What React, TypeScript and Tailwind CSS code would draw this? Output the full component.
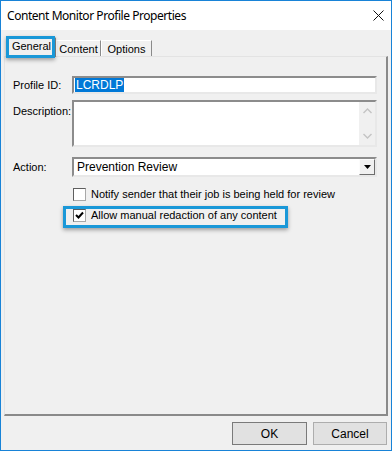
import React from 'react';

const sunken =
  'border-2 border-t-[#8c8c8c] border-l-[#8c8c8c] border-b-[#e8e8e8] border-r-[#e8e8e8] bg-white';
const raised =
  'border border-t-[#fcfcfc] border-l-[#fcfcfc] border-b-[#6d6d6d] border-r-[#6d6d6d]';

function Highlight({ className }: { className: string }) {
  // blue annotation box drawn over the dialog
  return (
    <div
      className={`pointer-events-none absolute border-[3px] border-[#1a98d8] shadow-[0_2px_4px_rgba(0,0,0,0.35)] ${className}`}
    />
  );
}

function Checkbox({ checked }: { checked?: boolean }) {
  return (
    <span className="w-[13px] h-[13px] shrink-0 bg-white border border-t-[#5e5e5e] border-l-[#5e5e5e] border-b-[#a8a8a8] border-r-[#a8a8a8] grid place-items-center">
      {checked && (
        <svg width="9" height="9" viewBox="0 0 9 9">
          <path d="M1 4 L3.5 6.5 L8 1.5" stroke="#000" strokeWidth="2" fill="none" />
        </svg>
      )}
    </span>
  );
}

export default function App() {
  return (
    <div className="w-[392px] h-[451px] flex flex-col border border-[#1883d7] bg-[#f0f0f0] text-[11px] text-black font-['Liberation_Sans',Arial,sans-serif]">
      {/* title bar */}
      <div className="h-[29px] shrink-0 bg-white flex items-center justify-between pl-[6px] pr-[7px]">
        <span className="text-[12px] font-['Noto_Sans','Liberation_Sans',sans-serif] tracking-[-0.45px]">
          Content Monitor Profile Properties
        </span>
        <svg width="11" height="11" viewBox="0 0 11 11">
          <path d="M0.5 0.5 L10.5 10.5 M10.5 0.5 L0.5 10.5" stroke="#111" strokeWidth="1" />
        </svg>
      </div>

      {/* body */}
      <div className="flex-1 flex flex-col">
        {/* tabs */}
        <div className="h-[26px] flex items-end px-[3px] pl-[6px]">
          <div className="relative z-10 -mb-px h-[20px] w-[49px] bg-[#f0f0f0] border-t border-l border-r border-t-white border-l-white border-r-[#8a8a8a] flex items-center justify-center pb-[2px]">
            General
            <Highlight className="-left-[2px] -top-[2px] w-[49px] h-[22px]" />
          </div>
          <div className="h-[16px] w-[45px] border-t border-l border-r border-t-white border-l-white border-r-[#8a8a8a] flex items-center justify-center pt-[1px]">
            Content
          </div>
          <div className="h-[16px] w-[51px] border-t border-l border-r border-t-white border-l-white border-r-[#8a8a8a] flex items-center justify-center pt-[1px]">
            Options
          </div>
        </div>

        {/* panel */}
        <div className="h-[360px] mx-[3px] border-t border-l border-t-[#e3e3e3] border-l-[#e3e3e3] border-r-2 border-b-2 border-r-[#8a8a8a] border-b-[#8a8a8a] pl-[8px] pr-[9px] pt-[19px] flex flex-col">
          <div className="flex items-center h-[18px]">
            <span className="w-[59px] shrink-0">Profile ID:</span>
            <div className={`flex-1 h-[18px] flex items-center pl-[1px] ${sunken}`}>
              <span className="bg-[#0078d7] text-white px-[1px] leading-[14px] text-[12px]">LCRDLP</span>
            </div>
          </div>

          <div className="flex mt-[6px] h-[47px]">
            <span className="w-[59px] shrink-0 pt-[3px]">Description:</span>
            <div className={`flex-1 flex justify-end ${sunken}`}>
              <div className="w-[16px] bg-[#f0f0f0] flex flex-col items-center justify-between py-[6px]">
                <svg width="9" height="6" viewBox="0 0 9 6">
                  <path d="M0.5 5 L4.5 1 L8.5 5" stroke="#c4c4c4" strokeWidth="1.4" fill="none" />
                </svg>
                <svg width="9" height="6" viewBox="0 0 9 6">
                  <path d="M0.5 1 L4.5 5 L8.5 1" stroke="#c4c4c4" strokeWidth="1.4" fill="none" />
                </svg>
              </div>
            </div>
          </div>

          <div className="flex items-center mt-[10px] h-[20px]">
            <span className="w-[59px] shrink-0">Action:</span>
            <div className={`flex-1 h-[20px] flex items-center justify-between pl-[3px] ${sunken}`}>
              <span className="text-[12px]">Prevention Review</span>
              <div className={`w-[16px] h-full bg-[#f0f0f0] grid place-items-center ${raised}`}>
                <svg width="7" height="4" viewBox="0 0 7 4">
                  <path d="M0 0 L7 0 L3.5 4 Z" fill="#000" />
                </svg>
              </div>
            </div>
          </div>

          <div className="flex items-center gap-[5px] mt-[11px] ml-[60px] h-[13px]">
            <Checkbox />
            <span>Notify sender that their job is being held for review</span>
          </div>

          <div className="relative flex items-center gap-[5px] mt-[8px] ml-[60px] h-[13px]">
            <Checkbox checked />
            <span>Allow manual redaction of any content</span>
            <Highlight className="-left-[10px] -top-[3px] w-[225px] h-[22px]" />
          </div>
        </div>

        {/* buttons */}
        <div className="flex-1 flex justify-end items-start gap-[6px] pt-[6px] pr-[4px]">
          <button className="w-[75px] h-[23px] bg-[#e1e1e1] border border-[#adadad] outline outline-1 outline-[#7a7a7a] -outline-offset-1 text-[12px]">
            OK
          </button>
          <button className="w-[74px] h-[23px] bg-[#e1e1e1] border border-[#adadad] text-[12px]">
            Cancel
          </button>
        </div>
      </div>
    </div>
  );
}
